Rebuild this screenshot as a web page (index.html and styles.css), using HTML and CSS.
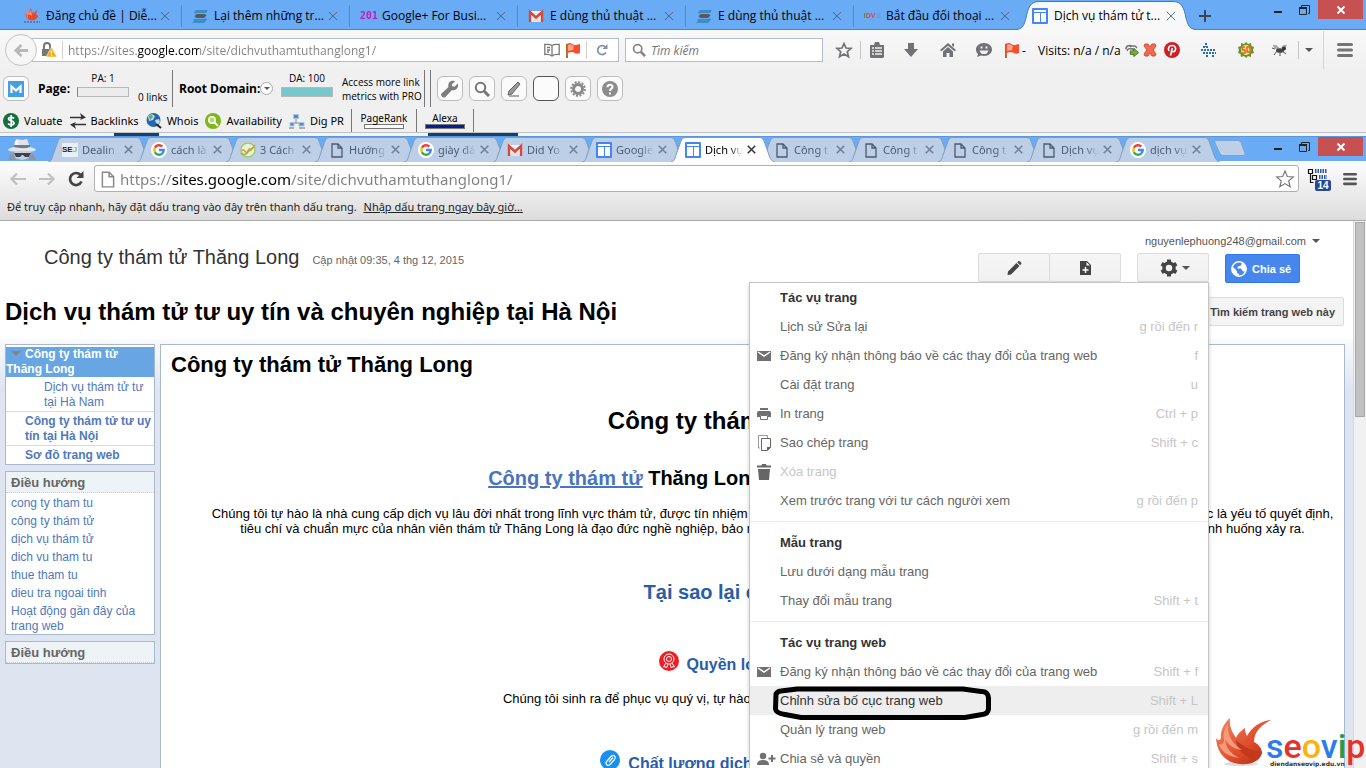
FILE: index.html
```html
<!DOCTYPE html>
<html lang="vi">
<head>
<meta charset="utf-8">
<title>Dịch vụ thám tử tư uy tín và chuyên nghiệp tại Hà Nội</title>
<link rel="stylesheet" href="styles.css">
</head>
<body>
<svg class="defs" aria-hidden="true">
  <symbol id="x" viewBox="0 0 12 12"><path d="M1 1l10 10M11 1L1 11" fill="none" stroke="currentColor"/></symbol>
  <symbol id="sites" viewBox="0 0 16 16"><path fill="#4285f4" d="M1 0h14a1 1 0 0 1 1 1v14a1 1 0 0 1-1 1H1a1 1 0 0 1-1-1V1a1 1 0 0 1 1-1z"/><path fill="#fff" d="M2 2h12v2H2zM2 5h6v9H2zM9 5h5v9H9z"/></symbol>
  <symbol id="stripes" viewBox="0 0 16 16"><path fill="#3c8dc4" d="M4 2h12l-2 3H5L3 6 2 4zM1 11h11l2-1 1 2-3 3H0l2-2z"/><path fill="#57595f" d="M5 6h8l1.500 1.500L12 10H4L2.500 8z"/></symbol>
  <symbol id="gmail" viewBox="0 0 16 16"><path fill="#f3f3f3" d="M2 3h12v11H2z"/><path fill="#e2e2e2" d="M2 14l6-6 6 6z"/><path fill="none" stroke="#d8493b" stroke-width="2.4" d="M2 14V4l6 5.500L14 4v10"/></symbol>
  <symbol id="google" viewBox="0 0 16 16"><circle cx="8" cy="8" r="8" fill="#fff"/><g fill="none" stroke-width="2.400"><path stroke="#ea4335" d="M3.900 5.800A4.700 4.700 0 0 1 11.300 4.500"/><path stroke="#fbbc05" d="M3.900 5.800a4.700 4.700 0 0 0 0 4.400"/><path stroke="#34a853" d="M3.900 10.200a4.700 4.700 0 0 0 7.300 1.400"/><path stroke="#4285f4" d="M11.200 11.600A4.600 4.600 0 0 0 12.700 8H8"/></g></symbol>
  <symbol id="page" viewBox="0 0 16 16"><path fill="none" stroke="currentColor" stroke-width="1.300" d="M3 2h6l4 4v9H3zM9 2v4h4"/></symbol>
  <symbol id="ctab" viewBox="0 0 104 25"><path d="M0 25C4 24 4 21 5 18L10 4Q11 .5 14 .500H89Q92 .5 93 4L98 18C99 21 100 24 104 25"/></symbol>
  <symbol id="restore" viewBox="0 0 12 12"><path fill="none" stroke="#222" d="M3.500 3V1.500h8v8H10"/><path fill="none" stroke="#222" d="M1 4.500h7.500v6H1.500v-7"/><path fill="#222" d="M1 3h8v2H1z"/></symbol>
  <symbol id="mail" viewBox="0 0 16 16"><path fill="#707070" d="M1 3h14v10H1z"/><path fill="none" stroke="#fff" stroke-width="1.500" d="M2 4l6 4 6-4"/></symbol>
  <symbol id="flag" viewBox="0 0 16 16"><path fill="#b5651d" d="M1 2l1.500-.5L3 16H1z"/><path fill="#f5502c" d="M2 2c4-3 6 2 9 1l4-1v9c-4 2-6-1-8-1l-5 1z"/><path fill="#fca58a" d="M3 3c3-2 5 1 6 1l-1 4-5 1z"/></symbol>
  <symbol id="lens" viewBox="0 0 16 16"><circle cx="6.500" cy="6.500" r="4.700" fill="none" stroke="currentColor" stroke-width="2"/><path stroke="currentColor" stroke-width="3" d="M10 10l5 5"/></symbol>
  <symbol id="burger" viewBox="0 0 16 16"><path stroke="currentColor" stroke-width="3" stroke-linecap="round" d="M1.500 2.500h13M1.500 8h13M1.500 13.500h13"/></symbol>
</svg>

<div class="firefox">
  <div class="ff-tabs">
    <div class="ff-tab"><svg class="i16" viewBox="0 0 16 16"><path fill="#e9492a" d="M7 0l1 5 2-2-1 3 5-5-2 5 2 2c-1 4-5 5-8 4C2 11 1 7 2 4l2 2z"/><path fill="#f99275" d="M7 2l1 6-4-2c-1 2 0 4 2 5l-3-2-1-5 3 1z"/><path fill="none" stroke="#5a7fae" stroke-width="2" stroke-dasharray="2 1" d="M0 14h16"/></svg><span>Đăng chủ đề | Diễ...</span><button aria-label="Đóng"><svg><use href="#x"/></svg></button></div>
    <div class="ff-tab"><svg class="i16"><use href="#stripes"/></svg><span>Lại thêm những tr...</span><button aria-label="Đóng"><svg><use href="#x"/></svg></button></div>
    <div class="ff-tab"><b class="fav fav-201">201</b><span>Google+ For Busi...</span><button aria-label="Đóng"><svg><use href="#x"/></svg></button></div>
    <div class="ff-tab"><svg class="i16"><use href="#gmail"/></svg><span>E dùng thủ thuật ...</span><button aria-label="Đóng"><svg><use href="#x"/></svg></button></div>
    <div class="ff-tab"><svg class="i16"><use href="#stripes"/></svg><span>E dùng thủ thuật ...</span><button aria-label="Đóng"><svg><use href="#x"/></svg></button></div>
    <div class="ff-tab last"><b class="fav fav-idvs">IDV<u>S</u></b><span>Bắt đầu đối thoại ...</span><button aria-label="Đóng"><svg><use href="#x"/></svg></button></div>
    <div class="ff-tab active"><svg class="shape" viewBox="0 0 180 31"><path d="M0 29.500C7 29 8 25 10 18 12 8 14 1.500 23 1.500H157C166 1.500 168 8 170 18 172 25 173 29 180 29.500V31H0z" fill="#f8f8f9"/><path d="M0 29.500C7 29 8 25 10 18 12 8 14 1.500 23 1.500H157C166 1.500 168 8 170 18 172 25 173 29 180 29.500" fill="none" stroke="#3f7ab8"/></svg><svg class="i16"><use href="#sites"/></svg><span>Dịch vụ thám tử t...</span><button aria-label="Đóng"><svg><use href="#x"/></svg></button></div>
    <button class="ff-new" aria-label="Thẻ mới"><svg viewBox="0 0 12 12"><path d="M6 0v12M0 6h12" stroke="#3b4652" stroke-width="2"/></svg></button>
    <div class="win"><button aria-label="Thu nhỏ"><svg viewBox="0 0 12 12"><path d="M2 8h8" stroke="#222" stroke-width="2"/></svg></button><button aria-label="Khôi phục"><svg><use href="#restore"/></svg></button><button class="close" aria-label="Đóng cửa sổ"><svg viewBox="0 0 12 12"><path d="M2.500 2.500l7 7M9.500 2.500l-7 7" stroke="#fff" stroke-width="2"/></svg></button></div>
  </div>

  <div class="ff-nav">
    <button class="back" aria-label="Quay lại"><svg viewBox="0 0 16 16"><path d="M8 2L2 8l6 6M2 8h13" fill="none" stroke="#b9b9b9" stroke-width="3"/></svg></button>
    <div class="ff-url">
      <svg class="i16" viewBox="0 0 16 16"><path d="M3 7V4a3 3 0 0 1 6 0v3" fill="none" stroke="#777" stroke-width="2"/><path fill="#777" d="M1 7h9v7H1z"/><path fill="#f7ac1b" stroke="#fff" stroke-width=".6" d="M10.500 5L16 15H5z"/><path stroke="#fff" stroke-width="1.300" d="M10.500 8.500v3M10.500 12.500v1.300"/></svg>
      <i class="bar"></i>
      <input class="addr" aria-label="Địa chỉ" value="https://sites.google.com/site/dichvuthamtuthanglong1/">
      <svg class="i16" viewBox="0 0 16 16"><path d="M8 3.500C6 2 3 2.500 .8 2.500v10c2.200 0 5-.5 7.200 1.500 2.200-2 5-1.500 7.200-1.500v-10c-2.200 0-5-.5-7.200 1zM8 4v9M3 5.500h3M3 8h3M3 10h2" fill="none" stroke="#777" stroke-width="1.300"/></svg>
      <svg class="i16"><use href="#flag"/></svg>
      <i class="bar"></i>
      <button class="plain" aria-label="Tải lại"><svg class="i12" viewBox="0 0 12 12"><path d="M10 8.500A4.500 4.500 0 1 1 9.500 3" fill="none" stroke="#8293a8" stroke-width="1.800"/><path fill="#8293a8" d="M11.500 0v5h-5z"/></svg></button>
    </div>
    <div class="ff-search"><svg class="i14"><use href="#lens"/></svg><input aria-label="Tìm kiếm" placeholder="Tìm kiếm"></div>
    <button class="c32" aria-label="Dấu trang"><svg class="i16" viewBox="0 0 16 16"><path d="M8 1.500l2 4.500 5 .5-3.700 3.200 1.200 5L8 12l-4.500 2.700 1.200-5L1 6.500 6 6z" fill="none" stroke="#707276" stroke-width="1.700"/></svg></button>
    <button class="c32 lsep" aria-label="Danh sách"><svg class="i16" viewBox="0 0 16 16"><path fill="#707276" d="M1 3h4l1-3h4l1 3h4v12l-1 1H2l-1-1z"/><path stroke="#f2f2f2" stroke-width="1.300" d="M3 6h2m1 0h7M3 9h2m1 0h7M3 12h2m1 0h7"/></svg></button>
    <button class="c38" aria-label="Tải xuống"><svg class="i16" viewBox="0 0 16 16"><path fill="#707276" d="M5 1h6v6h4l-7 8-7-8h4z"/></svg></button>
    <button class="c36" aria-label="Trang chủ"><svg class="i16" viewBox="0 0 16 16"><path fill="#707276" d="M8 1l8 7-1.500 1.300L8 3.700 1.500 9.300 0 8zM12 1.500h2V5l-2-1.500zM3 9.500L8 5l5 4.500V15H9.500v-4h-3v4H3z"/></svg></button>
    <button class="c36" aria-label="Trò chuyện"><svg class="i16" viewBox="0 0 16 16"><path fill="#707276" d="M8 1c5 0 8 3 8 6.500S13 14 8 14c-1 0-2 0-3-.4L1 15l1-3C.5 11 0 9 0 7.500 0 4 3 1 8 1z"/><path fill="#f2f2f2" d="M4.500 4.500h2v2h-2zM9.500 4.500h2v2h-2zM3.500 8.500h9c-1 3-2.500 3.500-4.500 3.500s-3.500-.5-4.500-3.500z"/></svg></button>
    <span class="c20"><svg class="i16"><use href="#flag"/></svg></span>
    <span class="dash">-</span>
    <span class="visits">Visits: n/a / n/a</span>
    <span class="c20"><svg class="i14" viewBox="0 0 16 16"><path d="M1 7c0-4 5-5 7-3M3 9c-2-2 5-4 7-1M5 4c3-1 9-1 8 2" fill="none" stroke="#777" stroke-width="1.800"/><path fill="#76ad3c" stroke="#3f6b1c" d="M6 9h4V6l5.500 5L10 15.500V13H6z"/></svg></span>
    <span class="c16"><svg class="i14" viewBox="0 0 14 14"><path fill="#f46a50" stroke="#d84a33" d="M2 1h3l2 3 2-3h3l1 2-3 4 3 4-1 2H9l-2-3-2 3H2l-1-2 3-4-3-4z"/></svg></span>
    <span class="c28"><svg class="i16" viewBox="0 0 16 16"><circle cx="8" cy="8" r="8" fill="#cb2027"/><path d="M5 9C3.500 6 5 3.500 8.200 3.500s4.300 3 2.800 5.300c-1 1.500-3 1.200-3.300 0M8.300 6L6.500 13.500" fill="none" stroke="#fff" stroke-width="1.600"/></svg></span>
    <span class="c44"><svg class="i16" viewBox="0 0 16 16"><g stroke="#2a6db8" stroke-width="2" stroke-dasharray="2 1"><path d="M6 1v4" /><path d="M3 5h5M1 8h15M3 11h13M6 14h3M12 14h3"/></g></svg></span>
    <span class="c32"><svg class="i16" viewBox="0 0 16 16"><path fill="#5c9a2d" d="M8 0l2 2 3-1 .500 3 2.500 1-1 3 1 3-3 1v3l-3-1-2 2-2-2-3 1-.500-3L0 11l1-3-1-3 3-1V1l3 1z"/><circle cx="8" cy="8" r="5" fill="#f6e7a0"/><path d="M7 5H4.500v3H7v3H4M9 5h3v5H9zM11 9l2 3" fill="none" stroke="#e8631c" stroke-width="1.500"/></svg></span>
    <span class="c36"><svg class="i16" viewBox="0 0 16 16"><path fill="#aaa" d="M1 3c3-1 5 1 7 4C4 8 1 6 1 3zM9 6c1-3 4-4 6-3-1 3-3 4-6 3z"/><ellipse cx="8" cy="8.500" rx="4" ry="2.300" fill="#444"/><circle cx="12" cy="6.500" r="2" fill="#333"/><path d="M5 9l-3 4M8 10v4M10 9l4 3M3 7L0 6" stroke="#555"/></svg></span>
    <button class="c20 lsep" aria-label="Thêm"><i class="caret"></i></button>
    <button class="c43 lsep2" aria-label="Trình đơn"><svg class="i16 mid-grey"><use href="#burger"/></svg></button>
  </div>

  <div class="moz">
    <button class="mbtn" aria-label="MozBar"><svg class="i16" viewBox="0 0 16 16"><path fill="#41a0e0" d="M0 0h16v16H0z"/><path d="M3.500 12V5.500L8 9.500l4.500-4V12" fill="none" stroke="#fff" stroke-width="2.200"/></svg></button>
    <b class="page-l">Page:</b>
    <div class="meter"><span>PA: 1</span><i class="pa"></i></div>
    <span class="links">0 links</span>
    <i class="vr"></i>
    <b class="root-l">Root Domain:</b>
    <button class="drop" aria-label="Chọn"><i class="caret"></i></button>
    <div class="meter"><span>DA: 100</span><i class="da"></i></div>
    <span class="pro">Access more link<br>metrics with PRO</span>
    <i class="vr"></i><i class="vr second"></i>
    <div class="tools">
      <button class="mbtn" aria-label="Công cụ"><svg class="i18" viewBox="0 0 16 16"><path fill="#7b7b7b" d="M15 3l-3 3-2-.5L9.500 4l3-3C10 0 7 1 6.500 4v2.500L0 12.500C0 15 2 16 3.500 15.500L9.500 9C13 9.500 16 7 15 3z"/></svg></button>
      <button class="mbtn" aria-label="Tìm"><svg class="i16"><use href="#lens"/></svg></button>
      <button class="mbtn" aria-label="Bút"><svg class="i16" viewBox="0 0 16 16"><path fill="#999" stroke="#666" d="M12 1l2 2-8 10-4 1 1-4z"/><path stroke="#aaa" stroke-width="2" d="M3 15h10"/></svg></button>
      <button class="mbtn blank" aria-label="Trống"></button>
      <button class="mbtn" aria-label="Cài đặt"><svg class="i16" viewBox="0 0 16 16"><circle cx="8" cy="8" r="4.500" fill="none" stroke="#888" stroke-width="3"/><circle cx="8" cy="8" r="6.800" fill="none" stroke="#888" stroke-width="2" stroke-dasharray="2 1.560"/></svg></button>
      <button class="mbtn" aria-label="Trợ giúp"><svg class="i16" viewBox="0 0 16 16"><circle cx="8" cy="8" r="8" fill="#8c8c8c"/><path d="M5.500 6.200c0-3.400 5-3.200 5-.4C10.500 7.800 8 7.500 8 10M8 11.500v2" fill="none" stroke="#fff" stroke-width="2"/></svg></button>
    </div>
  </div>

  <div class="seo">
    <a href="#"><svg class="i16" viewBox="0 0 16 16"><circle cx="8" cy="8" r="8" fill="#136f3b"/><path d="M11 5.500C10 3.800 5.500 4 5.500 6S11 7.500 11 10s-5 2.300-6 .500M8.200 2v12" fill="none" stroke="#fff" stroke-width="1.700"/></svg>Valuate</a>
    <a href="#"><svg class="i16" viewBox="0 0 16 16"><path d="M0 4.500h13M3 11.500h13" stroke="#333" stroke-width="1.500"/><path fill="#333" d="M10 0l6 4.500L10 7l1.500-2.500zM6 9l-6 2.500L6 16l-1.500-4.500z"/></svg>Backlinks</a>
    <a href="#"><svg class="i16" viewBox="0 0 16 16"><circle cx="7.500" cy="7" r="7" fill="#2765ad"/><path fill="#b9dcf2" d="M2 3l4-2 3 2-2 4-4 1zM9 7l4-1 1 3-3 4z"/><path fill="#6aa843" d="M3 3l3-1 1 2-3 3z"/><path stroke="#222" stroke-width="2" d="M10 11l5 4"/></svg>Whois</a>
    <a href="#"><svg class="i16" viewBox="0 0 16 16"><circle cx="8" cy="8" r="8" fill="#7fb51e"/><circle cx="7" cy="7" r="3.200" fill="#b7d86f" stroke="#fff" stroke-width="1.500"/><path stroke="#fff" stroke-width="2" d="M9.500 9.500L13 13"/></svg>Availability</a>
    <a href="#"><svg class="i16" viewBox="0 0 16 16"><path d="M7 6v4M3 12v-2h10v2" fill="none" stroke="#888"/><path fill="#4f8fd0" stroke="#aac6e2" d="M4.500 1.500h5v4h-5zM1 9.500h4v3.500H1zM10 9.500h5v3.500h-5z"/><path stroke="#999" stroke-width="1.500" d="M0 15h5M10 15h6"/></svg>Dig PR</a>
    <i class="vr"></i>
    <div class="rank pr"><span>PageRank</span><i></i></div>
    <i class="vr"></i>
    <div class="rank al"><span>Alexa</span><i></i></div>
    <i class="vr"></i>
  </div>
  <div class="peek"></div>
</div>

<div class="chrome">
  <div class="ch-tabs">
    <svg class="incog" viewBox="0 0 34 22"><path fill="#e1e4e8" d="M11 1l6 1 5-1 3 8c4 1 6 2 6 3s-5 2-14 2-14-1-14-2 2-2 6-3z"/><path fill="#f5f6f8" d="M10 3l3-1 1 8-5-1z"/><path fill="#707a85" d="M9 7h16v2c-6 2-11 1-16 0z"/><path fill="#c9cfd6" d="M9 13h17l-1 7-8 2-8-2z"/><path fill="#3a4350" d="M9 15h17l-2 4h-4l-2-2h-1l-2 2h-4z"/><path fill="#8d97a3" d="M3 22c1-5 3-6 6-6l2 6zM31 22c-1-5-3-6-6-6l-2 6z"/></svg>
    <div class="ch-tab"><svg class="shape"><use href="#ctab"/></svg><b class="fav fav-sej">SE<i>J</i></b><span>Dealin</span><button aria-label="Đóng"><svg><use href="#x"/></svg></button></div>
    <div class="ch-tab"><svg class="shape"><use href="#ctab"/></svg><svg class="i16"><use href="#google"/></svg><span>cách là</span><button aria-label="Đóng"><svg><use href="#x"/></svg></button></div>
    <div class="ch-tab"><svg class="shape"><use href="#ctab"/></svg><svg class="i16" viewBox="0 0 16 16"><circle cx="8" cy="8" r="7" fill="#e9f2da" stroke="#a9c96c" stroke-width="1.500"/><path d="M2 9c2-4 3 3 5 1s2-5 4-2l4-5" fill="none" stroke="#f09a3e" stroke-width="1.500"/><path d="M1 11c2 2 5 2 7-1l6-5" fill="none" stroke="#8abb3c" stroke-width="1.500"/></svg><span>3 Cách</span><button aria-label="Đóng"><svg><use href="#x"/></svg></button></div>
    <div class="ch-tab"><svg class="shape"><use href="#ctab"/></svg><svg class="i16"><use href="#page"/></svg><span>Hướng</span><button aria-label="Đóng"><svg><use href="#x"/></svg></button></div>
    <div class="ch-tab"><svg class="shape"><use href="#ctab"/></svg><svg class="i16"><use href="#google"/></svg><span>giày đá</span><button aria-label="Đóng"><svg><use href="#x"/></svg></button></div>
    <div class="ch-tab"><svg class="shape"><use href="#ctab"/></svg><svg class="i16"><use href="#gmail"/></svg><span>Did Yo</span><button aria-label="Đóng"><svg><use href="#x"/></svg></button></div>
    <div class="ch-tab"><svg class="shape"><use href="#ctab"/></svg><svg class="i16"><use href="#sites"/></svg><span>Google</span><button aria-label="Đóng"><svg><use href="#x"/></svg></button></div>
    <div class="ch-tab active"><svg class="shape"><use href="#ctab"/></svg><svg class="i16"><use href="#sites"/></svg><span>Dịch vụ</span><button aria-label="Đóng"><svg><use href="#x"/></svg></button></div>
    <div class="ch-tab"><svg class="shape"><use href="#ctab"/></svg><svg class="i16"><use href="#page"/></svg><span>Công t</span><button aria-label="Đóng"><svg><use href="#x"/></svg></button></div>
    <div class="ch-tab"><svg class="shape"><use href="#ctab"/></svg><svg class="i16"><use href="#page"/></svg><span>Công t</span><button aria-label="Đóng"><svg><use href="#x"/></svg></button></div>
    <div class="ch-tab"><svg class="shape"><use href="#ctab"/></svg><svg class="i16"><use href="#page"/></svg><span>Công t</span><button aria-label="Đóng"><svg><use href="#x"/></svg></button></div>
    <div class="ch-tab"><svg class="shape"><use href="#ctab"/></svg><svg class="i16"><use href="#page"/></svg><span>Dịch vụ</span><button aria-label="Đóng"><svg><use href="#x"/></svg></button></div>
    <div class="ch-tab"><svg class="shape"><use href="#ctab"/></svg><svg class="i16"><use href="#google"/></svg><span>dịch vụ</span><button aria-label="Đóng"><svg><use href="#x"/></svg></button></div>
    <button class="ch-new" aria-label="Thẻ mới"><svg viewBox="0 0 32 16"><path d="M2 .5h22q2 0 3 2l4 11q0 2-2 2H9q-2 0-3-2L1 3Q0 .5 2 .500z" fill="#bdd0e8" stroke="#7fa3cf"/></svg></button>
    <div class="win"><button aria-label="Thu nhỏ"><svg viewBox="0 0 12 12"><path d="M2 8h8" stroke="#222" stroke-width="2"/></svg></button><button aria-label="Khôi phục"><svg><use href="#restore"/></svg></button><button class="close" aria-label="Đóng cửa sổ"><svg viewBox="0 0 12 12"><path d="M2.500 2.500l7 7M9.500 2.500l-7 7" stroke="#fff" stroke-width="2"/></svg></button></div>
  </div>
  <div class="ch-bar">
    <button class="c29 dim" aria-label="Quay lại"><svg class="i16" viewBox="0 0 16 16"><path d="M7 2.500L1.500 8 7 13.500M2 8h14" fill="none" stroke="currentColor" stroke-width="2.200"/></svg></button>
    <button class="c29 dim" aria-label="Tiến"><svg class="i16" viewBox="0 0 16 16"><path d="M9 2.500L14.500 8 9 13.500M14 8H0" fill="none" stroke="currentColor" stroke-width="2.200"/></svg></button>
    <button class="c29" aria-label="Tải lại"><svg class="i16" viewBox="0 0 16 16"><path d="M13.500 10.500A6 6 0 1 1 12.500 4" fill="none" stroke="#444" stroke-width="2.700"/><path fill="#444" d="M15.500 0v7H8.500z"/></svg></button>
    <div class="omni">
      <svg class="i18 pg"><use href="#page"/></svg>
      <input class="addr" aria-label="Địa chỉ" value="https://sites.google.com/site/dichvuthamtuthanglong1/">
      <svg class="i18" viewBox="0 0 18 18"><path d="M9 1l2.300 5.500 6 .5-4.600 3.900 1.500 5.900L9 13.600l-5.200 3.200 1.500-5.900L.7 7l6-.5z" fill="#fff" stroke="#777" stroke-width="1.200"/></svg>
    </div>
    <span class="ext"><svg viewBox="0 0 24 24"><path fill="none" stroke="#111" stroke-width="1.200" d="M1.500 2.500h4v4h-4zM5.500 8.500h4v4h-4zM3.500 6.500v9h3"/><path stroke="#2b57a7" stroke-width="4" stroke-dasharray="1.500 1" d="M8 4h12M12 10h8"/><rect x="8" y="13" width="16" height="11" rx="2" fill="#27479b"/></svg><b>14</b></span>
    <button class="plain dark" aria-label="Trình đơn"><svg class="i14"><use href="#burger"/></svg></button>
  </div>
  <div class="ch-book">Để truy cập nhanh, hãy đặt dấu trang vào đây trên thanh dấu trang. <a href="#">Nhập dấu trang ngay bây giờ...</a></div>
</div>

<div class="viewport">
  <div class="site">
    <header class="head">
      <div class="crumb"><span class="name">Công ty thám tử Thăng Long</span><span class="upd">Cập nhật 09:35, 4 thg 12, 2015</span></div>
      <div class="acct">
        <div class="mail">nguyenlephuong248@gmail.com <i class="caret"></i></div>
        <div class="btns">
          <button class="gbtn" aria-label="Chỉnh sửa trang"><svg class="i16" viewBox="0 0 16 16"><path fill="#444" d="M2 11.500L10.500 3l3 3L5 14.500l-3.500.5zM11.200 2.300l1-1q1-.6 2 .3l.8 1q.8.900 0 1.700l-1 1z"/></svg></button>
          <button class="gbtn join" aria-label="Trang mới"><svg class="i16" viewBox="0 0 16 16"><path fill="#444" d="M3 1h7l4 4v10H3z"/><path fill="#f5f5f5" d="M9.500 2v3.500H13z"/><path stroke="#fff" stroke-width="1.500" d="M8.500 7v6M5.500 10h6"/></svg></button>
          <div class="gear">
            <button class="gbtn" aria-label="Tác vụ khác" aria-expanded="true"><svg class="i18" viewBox="0 0 18 18"><circle cx="9" cy="9" r="5" fill="none" stroke="#444" stroke-width="3.500"/><path stroke="#444" stroke-width="4" d="M9 .5v3M9 14.500v3M1.600 4.700l2.600 1.500M13.800 11.800l2.600 1.500M1.600 13.300l2.600-1.500M13.800 6.200l2.600-1.500"/></svg><i class="caret"></i></button>
            <div class="menu">
              <h6>Tác vụ trang</h6>
              <button><span>Lịch sử Sửa lại</span><kbd>g rồi đến r</kbd></button>
              <button><svg><use href="#mail"/></svg><span>Đăng ký nhận thông báo về các thay đổi của trang web</span><kbd>f</kbd></button>
              <button><span>Cài đặt trang</span><kbd>u</kbd></button>
              <button><svg viewBox="0 0 16 16"><path fill="#707070" d="M4 2h8v2H4zM3 5h10q2 0 2 2v4h-3V9H4v2H1V7q0-2 2-2z"/><path fill="#fff" stroke="#707070" d="M4.500 9.500h7v4h-7z"/></svg><span>In trang</span><kbd>Ctrl + p</kbd></button>
              <button><svg viewBox="0 0 16 16"><path d="M4 13H2.500V.5h9V3" fill="none" stroke="#999"/><path d="M5.500 3.500h9v9l-3 3h-6z" fill="#fff" stroke="#666"/><path fill="#666" d="M11 12h4l-4 4z"/></svg><span>Sao chép trang</span><kbd>Shift + c</kbd></button>
              <button disabled><svg viewBox="0 0 16 16"><path fill="#666" d="M1 1.500h4.500L6 0h4l.5 1.500H15v2H1zM2 5h12l-1 11H3z"/></svg><span>Xóa trang</span></button>
              <button><span>Xem trước trang với tư cách người xem</span><kbd>g rồi đến p</kbd></button>
              <hr>
              <h6>Mẫu trang</h6>
              <button><span>Lưu dưới dạng mẫu trang</span></button>
              <button><span>Thay đổi mẫu trang</span><kbd>Shift + t</kbd></button>
              <hr>
              <h6>Tác vụ trang web</h6>
              <button><svg><use href="#mail"/></svg><span>Đăng ký nhận thông báo về các thay đổi của trang web</span><kbd>Shift + f</kbd></button>
              <button class="hot"><span>Chỉnh sửa bố cục trang web</span><kbd>Shift + L</kbd><svg class="ring" viewBox="0 0 218 35"><path d="M3 8Q5 5 8 5L24 3H190L208 5.500Q215 5 215.500 12V23Q215 28 209 28.500L192 31.500H28L12 28.500Q3 27 2.500 23z" fill="none" stroke="#000" stroke-width="5"/></svg></button>
              <button><span>Quản lý trang web</span><kbd>g rồi đến m</kbd></button>
              <button><svg class="wide" viewBox="0 0 20 16"><circle cx="7" cy="5" r="3.200" fill="#707070"/><path fill="#707070" d="M1 14c0-4 3-5 6-5s6 1 6 5z"/><path stroke="#707070" stroke-width="2" d="M16 4v7M12.500 7.500h7"/></svg><span>Chia sẻ và quyền</span><kbd>Shift + s</kbd></button>
            </div>
          </div>
          <button class="share"><svg class="i16" viewBox="0 0 16 16"><circle cx="8" cy="8" r="7.200" fill="#4787ed" stroke="#fff" stroke-width="1.500"/><path fill="#fff" d="M1 5l5 5v2l2 1v2.500C3 15 0 10 1 5zM7 1l4 .5-1 3-3 1-1 2h4l2 3h2.500C16 7 14 1 7 1z"/></svg>Chia sẻ</button>
        </div>
      </div>
    </header>
    <div class="banner"><h1>Dịch vụ thám tử tư uy tín và chuyên nghiệp tại Hà Nội</h1><button class="find">Tìm kiếm trang web này</button></div>
    <div class="main">
      <aside>
        <nav class="box tree">
          <a class="cur" href="#"><i class="caret"></i>Công ty thám tử Thăng Long</a>
          <a class="sub" href="#">Dịch vụ thám tử tư tại Hà Nam</a>
          <a class="top" href="#">Công ty thám tử tư uy tín tại Hà Nội</a>
          <a class="top" href="#">Sơ đồ trang web</a>
        </nav>
        <nav class="box"><h4>Điều hướng</h4>
          <a href="#">cong ty tham tu</a><a href="#">công ty thám tử</a><a href="#">dịch vụ thám tử</a><a href="#">dich vu tham tu</a><a href="#">thue tham tu</a><a href="#">dieu tra ngoai tinh</a><a href="#">Hoạt động gần đây của trang web</a>
        </nav>
        <nav class="box"><h4>Điều hướng</h4></nav>
      </aside>
      <article>
        <h2>Công ty thám tử Thăng Long</h2>
        <div class="body">
          <h3 class="big">Công ty thám tử Thăng Long</h3>
          <h3 class="mid"><a href="#">Công ty thám tử</a> Thăng Long uy tín chuyên nghiệp ở Hà Nội</h3>
          <p>Chúng tôi tự hào là nhà cung cấp dịch vụ lâu đời nhất trong lĩnh vực thám tử, được tín nhiệm nhất hiện nay. Chúng tôi luôn coi trọng con người và chất lượng phục vụ mọi lúc là yếu tố quyết định,<br>tiêu chí và chuẩn mực của nhân viên thám tử Thăng Long là đạo đức nghề nghiệp, bảo mật thông tin tuyệt đối cho khách hàng và luôn luôn hết lòng tận tâm xử lý mọi tình huống xảy ra.</p>
          <h3 class="why">Tại sao lại chọn chúng tôi?</h3>
          <h4><svg viewBox="0 0 20 20"><circle cx="10" cy="10" r="10" fill="#ee1c23"/><g fill="none" stroke="#fff"><circle cx="10" cy="8" r="5"/><circle cx="10" cy="8" r="2.500"/><path d="M7 12l-2.500 4 2-.3L7.500 17l1.500-4M13 12l2.500 4-2-.3-1 1.300-1.500-4"/></g></svg><span>Quyền lợi của khách hàng</span></h4>
          <p>Chúng tôi sinh ra để phục vụ quý vị, tự hào mang đến cho quý vị các dịch vụ thám tử tốt nhất.</p>
          <h4 class="q"><svg viewBox="0 0 20 20"><circle cx="10" cy="10" r="10" fill="#1b8fee"/><path d="M7 15q-2-2 0-4l4-4.500q2-2 3.500-.5t0 3.500l-4.500 5q-1.500 1.500-3 .500zM9 12l4-4.500" fill="none" stroke="#fff" stroke-width="1.200"/></svg><span>Chất lượng dịch vụ chuyên nghiệp, uy tín</span></h4>
        </div>
      </article>
    </div>
  </div>
  <div class="scroll"><i></i></div>
  <div class="brand">
    <svg viewBox="0 0 56 48"><defs><linearGradient id="fl" x1="0" y1="0" x2="1" y2="1"><stop offset="0" stop-color="#f58a67"/><stop offset=".6" stop-color="#dc4a28"/><stop offset="1" stop-color="#a32a12"/></linearGradient></defs><ellipse cx="25" cy="46" rx="17" ry="2" fill="#ddd"/><path fill="url(#fl)" d="M14 0c-1 10 3 15 6 20 2-5 5-7 9-10 0 4 1 6 2 8C36 9 44 3 55 2 45 7 38 14 38 24c4 2 8 6 8 11-2 9-13 12-22 11C10 45 1 35 0 20c2 3 4 3 5 0C4 13 8 5 14 0z"/><path fill="#c23a1b" d="M20 22c8 8 17 11 26 12-1 3-3 5-6 7-11-1-19-9-20-19z"/><path fill="#f79a7a" d="M12 6c-1 12 5 20 14 26-8-1-14-5-17-11 0 8 6 15 14 19C9 38 4 31 3 26c3 1 5-1 5-4-1-6 0-11 4-16z"/></svg>
    <div><strong><i class="b">s</i><i class="r">e</i><i class="y">o</i><i class="b">v</i><i class="g">i</i><i class="r">p</i></strong><small>diendanseovip.edu.vn</small></div>
  </div>
</div>
</body>
</html>
```
FILE: styles.css
```css
* { box-sizing: border-box; }
html, body { height: 100%; }
body {
  margin: 0;
  display: flex;
  flex-direction: column;
  overflow: hidden;
  background: #fff;
  font: 12px "Open Sans", "Noto Sans", sans-serif;
  color: #000;
}
button {
  font: inherit;
  color: inherit;
  padding: 0;
  margin: 0;
  border: 0;
  background: none;
}
input { font: inherit; border: 0; padding: 0; background: none; min-width: 0; outline: 0; }
h1, h2, h3, h4, h6, p { margin: 0; }
i, u { font-style: normal; text-decoration: none; }
svg { display: block; overflow: visible; flex: none; }
.defs { position: absolute; width: 0; height: 0; }
.i12 { width: 12px; height: 12px; }
.i14 { width: 14px; height: 14px; }
.i16 { width: 16px; height: 16px; }
.i18 { width: 18px; height: 18px; }
.caret {
  display: inline-block;
  border: 4px solid transparent;
  border-top-color: #555;
  border-bottom: 0;
}
.vr { width: 1px; background: #777; align-self: stretch; flex: none; }
.fav { width: 16px; flex: none; font: bold 10px/16px "Liberation Sans", sans-serif; white-space: nowrap; }

/* Outer browser window */
.firefox { background: #f0f0f0; flex: none; }
.ff-tabs {
  display: flex;
  height: 30px;
  padding-left: 14px;
  background: #6aabf6;
  border-bottom: 1px solid #4a86c6;
}
.ff-tab {
  display: flex;
  align-items: center;
  flex: 0 1 168px;
  position: relative;
  padding: 2px 12px 0 10px;
  white-space: nowrap;
}
.ff-tab:not(.last):not(.active)::after {
  content: "";
  align-self: stretch;
  width: 1px;
  margin: 3px -12px 2px 11px;
  background: #4f8bd0;
}
.ff-tab span { flex: 1; margin-left: 6px; position: relative; }
.ff-tab button svg { width: 10px; height: 10px; color: #45597a; position: relative; }
.ff-tab.active { z-index: 1; padding-right: 14px; }
.ff-tab .i16 { position: relative; }
.ff-tab .shape { position: absolute; left: -6px; top: 0; width: 180px; height: 31px; }
.fav-201 { color: #c01bc4; font-family: "DejaVu Sans Mono", monospace; font-size: 10px; }
.fav-idvs { color: #d9502e; font-size: 7px; }
.fav-idvs u { color: #55a7dc; }
.ff-new { margin: 2px 0 0 9px; }
.ff-new svg { width: 12px; height: 12px; }
.win { margin-left: auto; display: flex; height: 19px; padding-right: 3px; }
.win button { width: 26px; display: grid; place-items: center; }
.win svg { width: 12px; height: 12px; }
.win .close { width: 45px; margin-left: 1px; background: #c75050; }

.ff-nav { display: flex; align-items: center; height: 40px; padding-left: 5px; background: linear-gradient(#f8f8f9, #f0f0f0); }
.back {
  width: 32px; height: 32px;
  border: 1px solid #c4c4c4;
  border-radius: 50%;
  background: #f6f6f6;
  display: grid; place-items: center;
  position: relative;
  flex: none;
}
.back svg { width: 15px; height: 15px; }
.ff-url {
  display: flex; align-items: center; gap: 5px;
  flex: 1;
  height: 24px;
  margin-left: -8px;
  padding: 0 10px 0 11px;
  background: #fff;
  border: 1px solid #b4bcc8;
}
.bar { width: 1px; height: 18px; background: #d0d0d0; }
.addr {
  flex: 1;
  height: 100%;
  -webkit-text-fill-color: transparent;
  -webkit-background-clip: text;
  background-clip: text;
}
.ff-url .addr { background-image: linear-gradient(90deg, #808080 69px, #000 69px 131px, #808080 131px); }
.ff-url .plain { margin-left: 4px; }
.ff-search {
  display: flex; align-items: center; gap: 5px;
  width: 198px; height: 24px;
  margin: 0 5px 0 6px;
  padding-left: 6px;
  background: #fff;
  border: 1px solid #b4bcc8;
  color: #888;
}
.ff-search input { flex: 1; font-style: italic; }
.ff-search input::placeholder { color: #757575; opacity: 1; }
.c16, .c20, .c28, .c29, .c32, .c36, .c38, .c43, .c44 { display: grid; place-items: center; height: 18px; flex: none; }
.c16 { width: 16px; }
.c20 { width: 20px; }
.c28 { width: 28px; }
.c29 { width: 29px; }
.c32 { width: 32px; }
.c36 { width: 36px; }
.c38 { width: 38px; }
.c43 { width: 43px; }
.c44 { width: 44px; }
.lsep { border-left: 1px solid #c4c4c4; }
.lsep2 { border-left: 1px solid #d4d4d4; height: 38px; margin-left: 5px; }
.mid-grey { color: #737373; }
.dash { width: 16px; }
.visits { width: 84px; white-space: nowrap; }

.moz { display: flex; align-items: center; height: 37px; padding: 0 4px 0 3px; white-space: nowrap; }
.mbtn {
  display: grid; place-items: center;
  width: 26px; height: 25px;
  border: 1px solid #bdbdbd;
  border-radius: 6px;
  background: #fbfbfb;
  color: #777;
}
.mbtn.blank { border-color: #555; }
.page-l { margin-left: 9px; width: 39px; }
.meter { width: 52px; text-align: center; font-size: 10px; line-height: 13px; align-self: flex-start; padding-top: 2px; }
.meter i { display: block; height: 10px; margin-top: 2px; border: 1px solid #b9b9b9; background: #ececec; }
.meter .pa { border-left: 1px solid #e55; }
.meter .da { background: #77c8cd; }
.links { font-size: 10px; margin: 16px 0 0 9px; width: 34px; }
.root-l { margin-left: 6px; width: 81px; }
.drop { width: 13px; height: 13px; margin-right: 8px; border: 1px solid #aaa; border-radius: 50%; background: #fff; display: grid; place-items: center; }
.drop .caret { border-width: 3px 3px 0; }
.pro { font-size: 10px; line-height: 14px; margin-left: 9px; width: 82px; }
.second { margin-left: 5px; }
.tools { display: flex; gap: 6px; margin-left: 6px; }

.seo { display: flex; align-items: center; height: 26px; padding: 2px 0 0 3px; white-space: nowrap; border-bottom: 1px solid #c2c2c2; font: 11px "Noto Sans", sans-serif; }
.seo a { display: flex; align-items: center; gap: 5px; margin-right: 7px; color: #000; text-decoration: none; }
.rank { font: 10px/12px "Noto Sans", sans-serif; text-align: center; }
.rank i { display: block; width: 40px; height: 5px; margin: 0 auto; border: 1px solid #777; background: #fff; }
.rank.pr { width: 64px; }
.rank.al { width: 56px; }
.rank.al i { background: #00209a; }
.peek {
  height: 3px;
  background: linear-gradient(90deg, #f4f4f4 114px, #0e4270 114px 159px, #f4f4f4 159px 428px, #0e4270 428px 518px, #f4f4f4 518px);
}

/* Inner browser window */
.chrome { flex: none; background: linear-gradient(#fdfdfd 26px, #dcdcdc); border-bottom: 1px solid #a9a9a9; }
.ch-tabs { display: flex; height: 25px; background: #6aabf6; border-top: 1px solid #5a97dc; color: #4d5b72; }
.incog { width: 34px; height: 24px; margin: 0 9px 0 5px; }
.ch-tab {
  position: relative;
  display: flex; align-items: center;
  flex: 0 0 89px;
  padding: 1px 0 0 14px;
  white-space: nowrap;
}
.ch-tab > * { position: relative; }
.ch-tab .shape { position: absolute; left: 0; top: 0; width: 104px; height: 25px; fill: #bccfe6; stroke: #7e9cc0; }
.ch-tab span {
  width: 38px; margin-left: 4px;
  font: 11px "Noto Sans", sans-serif;
  -webkit-mask-image: linear-gradient(90deg, #000 24px, transparent);
  mask-image: linear-gradient(90deg, #000 24px, transparent);
}
.ch-tab button { margin-left: 4px; }
.ch-tab button svg { width: 9px; height: 9px; stroke-width: 2; color: #6e7f97; }
.ch-tab.active { z-index: 2; color: #000; }
.ch-tab.active .shape { fill: #fdfdfd; }
.ch-tab.active button svg { color: #333; }
.fav-sej { font-size: 8px; line-height: 14px; background: #e8eff7; color: #222; }
.fav-sej i { color: #8bc53f; }
.ch-new { margin: 0 0 2px 9px; }
.ch-new svg { width: 32px; height: 16px; }

.ch-bar { display: flex; align-items: center; height: 35px; padding: 0 9px 0 3px; }
.dim { color: #c0c0c0; }
.omni {
  flex: 1; display: flex; align-items: center;
  height: 27px;
  margin-left: 4px;
  padding: 0 4px;
  background: #fff;
  border: 1px solid #b0b0b0;
  border-radius: 3px;
}
.omni .addr { font-family: "Noto Sans", sans-serif; font-size: 15px; margin-left: 3px; background-image: linear-gradient(90deg, #808080 51px, #000 51px 171px, #808080 171px); }
.pg { color: #888; }
.ext { position: relative; width: 24px; height: 24px; margin: 0 12px 0 8px; }
.ext b { position: absolute; right: 0; bottom: 0; width: 16px; text-align: center; color: #fff; font: bold 10px/11px "Liberation Sans", sans-serif; }
.dark { color: #555; }
.ch-book { height: 24px; padding-left: 7px; white-space: nowrap; font: 11px/22px "Noto Sans", sans-serif; color: #222; }
.ch-book a { color: #222; margin-left: 4px; }

/* Web page */
.viewport { position: relative; flex: 1; min-height: 0; display: flex; overflow: hidden; font-family: "Liberation Sans", Arial, sans-serif; }
.site { flex: 1; min-width: 0; display: flex; flex-direction: column; }
.head { display: flex; justify-content: space-between; padding: 12px 33px 0 44px; }
.crumb { padding-top: 12px; line-height: 24px; white-space: nowrap; }
.name { font-size: 20px; color: #333; }
.upd { font-size: 11px; font-weight: normal; color: #666; margin-left: 13px; }
.mail { font-size: 11px; line-height: 16px; text-align: right; color: #555; }
.mail .caret { margin: 0 0 2px 3px; }
.btns { display: flex; margin: 4px 20px 0 0; }
.gbtn {
  width: 72px; height: 29px;
  border: 1px solid #dcdcdc;
  border-radius: 2px;
  background: linear-gradient(#f5f5f5, #f1f1f1);
  display: flex; align-items: center; justify-content: center; gap: 4px;
}
.gbtn.join { margin-left: -1px; }
.gear { position: relative; margin: 0 16px; }
.gear > .gbtn { padding-left: 4px; }
.share {
  display: flex; align-items: center; gap: 5px;
  height: 29px; width: 75px; padding: 0 5px;
  margin-top: 1px;
  border: 1px solid #3079ed; border-radius: 2px;
  background: #4787ed; color: #fff;
  font-size: 11px; font-weight: bold;
  white-space: nowrap;
}
.menu {
  position: absolute; right: 0; top: 100%; z-index: 5;
  width: 460px;
  margin-top: -1px;
  background: #fff;
  border: 1px solid #c4c4c4;
  box-shadow: 0 2px 4px rgba(0, 0, 0, .2);
  font-size: 13px;
}
.menu h6 { font-size: 13px; line-height: 29px; padding-left: 30px; color: #333; }
.menu button {
  display: flex; align-items: center; justify-content: space-between;
  position: relative;
  width: 100%; height: 29px;
  padding: 0 10px 0 30px;
  color: #666;
}
.menu button > svg { position: absolute; left: 6px; width: 16px; height: 16px; }
.menu button > .wide { width: 20px; }
.menu kbd { font: inherit; color: #c6c6c6; }
.menu button:disabled { color: #c6c6c6; }
.menu .hot { background: #eee; color: #333; }
.menu button > .ring { left: 23px; top: 0; width: 218px; height: 35px; z-index: 1; }
.menu hr { margin: 6px 0; border: 0; height: 1px; background: #ebebeb; }

.banner { display: flex; align-items: center; justify-content: space-between; margin-top: 14px; padding: 0 9px 13px 5px; }
.banner h1 { font-size: 24px; line-height: 29px; white-space: nowrap; }
.find { height: 29px; padding: 0 8px; border: 1px solid #dcdcdc; border-radius: 2px; background: #f4f4f4; color: #444; font-size: 11px; font-weight: bold; }
.main {
  flex: 1;
  display: flex; gap: 5px;
  padding: 5px 8px 0 5px;
  background: linear-gradient(#fafbfe, #dee5f1 50px);
}
aside { width: 150px; flex: none; }
.box { margin-bottom: 6px; border: 1px solid #a9b9cd; background: #fff; font-size: 12px; line-height: 15px; }
.box a { display: block; color: #5079bd; text-decoration: none; padding: 3px 5px 0; }
.box h4 { height: 21px; padding-left: 5px; font-size: 13px; line-height: 21px; color: #666; background: #edf3f7; border-bottom: 1px dotted #c5cdd8; }
.tree { padding-top: 2px; }
.tree .cur { background: #68a5e3; color: #fff; font-weight: bold; padding: 0; }
.tree .caret { border-width: 5px 5px 0; border-top-color: #8d8080; margin: 0 4px 2px 5px; }
.tree .sub { padding: 3px 5px 1px 38px; border-bottom: 1px solid #d5dce8; }
.tree .top { padding: 2px 0 1px 19px; font-weight: bold; }
.tree .top + .top { border-top: 1px solid #d5dce8; }
article { flex: 1; min-width: 0; padding: 6px 10px 0; border: 1px solid #a9b9cd; border-bottom: 0; background: #fff; }
article h2 { font-size: 22px; line-height: 28px; }
.body { padding-left: 40px; text-align: center; font-size: 13px; line-height: 15px; white-space: nowrap; }
.big { font-size: 24px; line-height: 28px; }
.mid { font-size: 20px; line-height: 24px; }
.mid a { color: #4a74bd; }
.body h3.big { margin-top: 28px; }
.body h3.mid { margin-top: 31px; }
.body p { margin-top: 16px; }
.body h3.why { margin-top: 44px; font-size: 20px; line-height: 24px; color: #2a5da8; }
.body h4 { display: flex; justify-content: center; gap: 8px; margin-top: 47px; color: #2a5da8; font-size: 16px; line-height: 20px; }
.body h4.q { margin-top: 44px; }
.body h4 svg { width: 20px; height: 20px; }
.body h4 span { margin-top: 4px; }
.scroll { width: 13px; background: #f1f1f1; border-left: 1px solid #d8d8d8; padding: 1px; }
.scroll i { display: block; height: 195px; background: #c1c1c1; border: 1px solid #a8a8a8; }
.brand { position: absolute; right: 0; bottom: 0; z-index: 6; display: flex; width: 150px; height: 50px; }
.brand svg { width: 56px; height: 48px; margin-right: -6px; }
.brand strong { display: block; font: 500 34px/36px Roboto, sans-serif; margin-top: 10px; white-space: nowrap; }
.brand small { position: absolute; left: 54px; bottom: 1px; font: bold 6px/7px "DejaVu Sans", sans-serif; color: #333; white-space: nowrap; }
.brand .b { color: #2e7bea; }
.brand .r { color: #e3342b; }
.brand .y { color: #fbb20b; }
.brand .g { color: #27994a; }
```
